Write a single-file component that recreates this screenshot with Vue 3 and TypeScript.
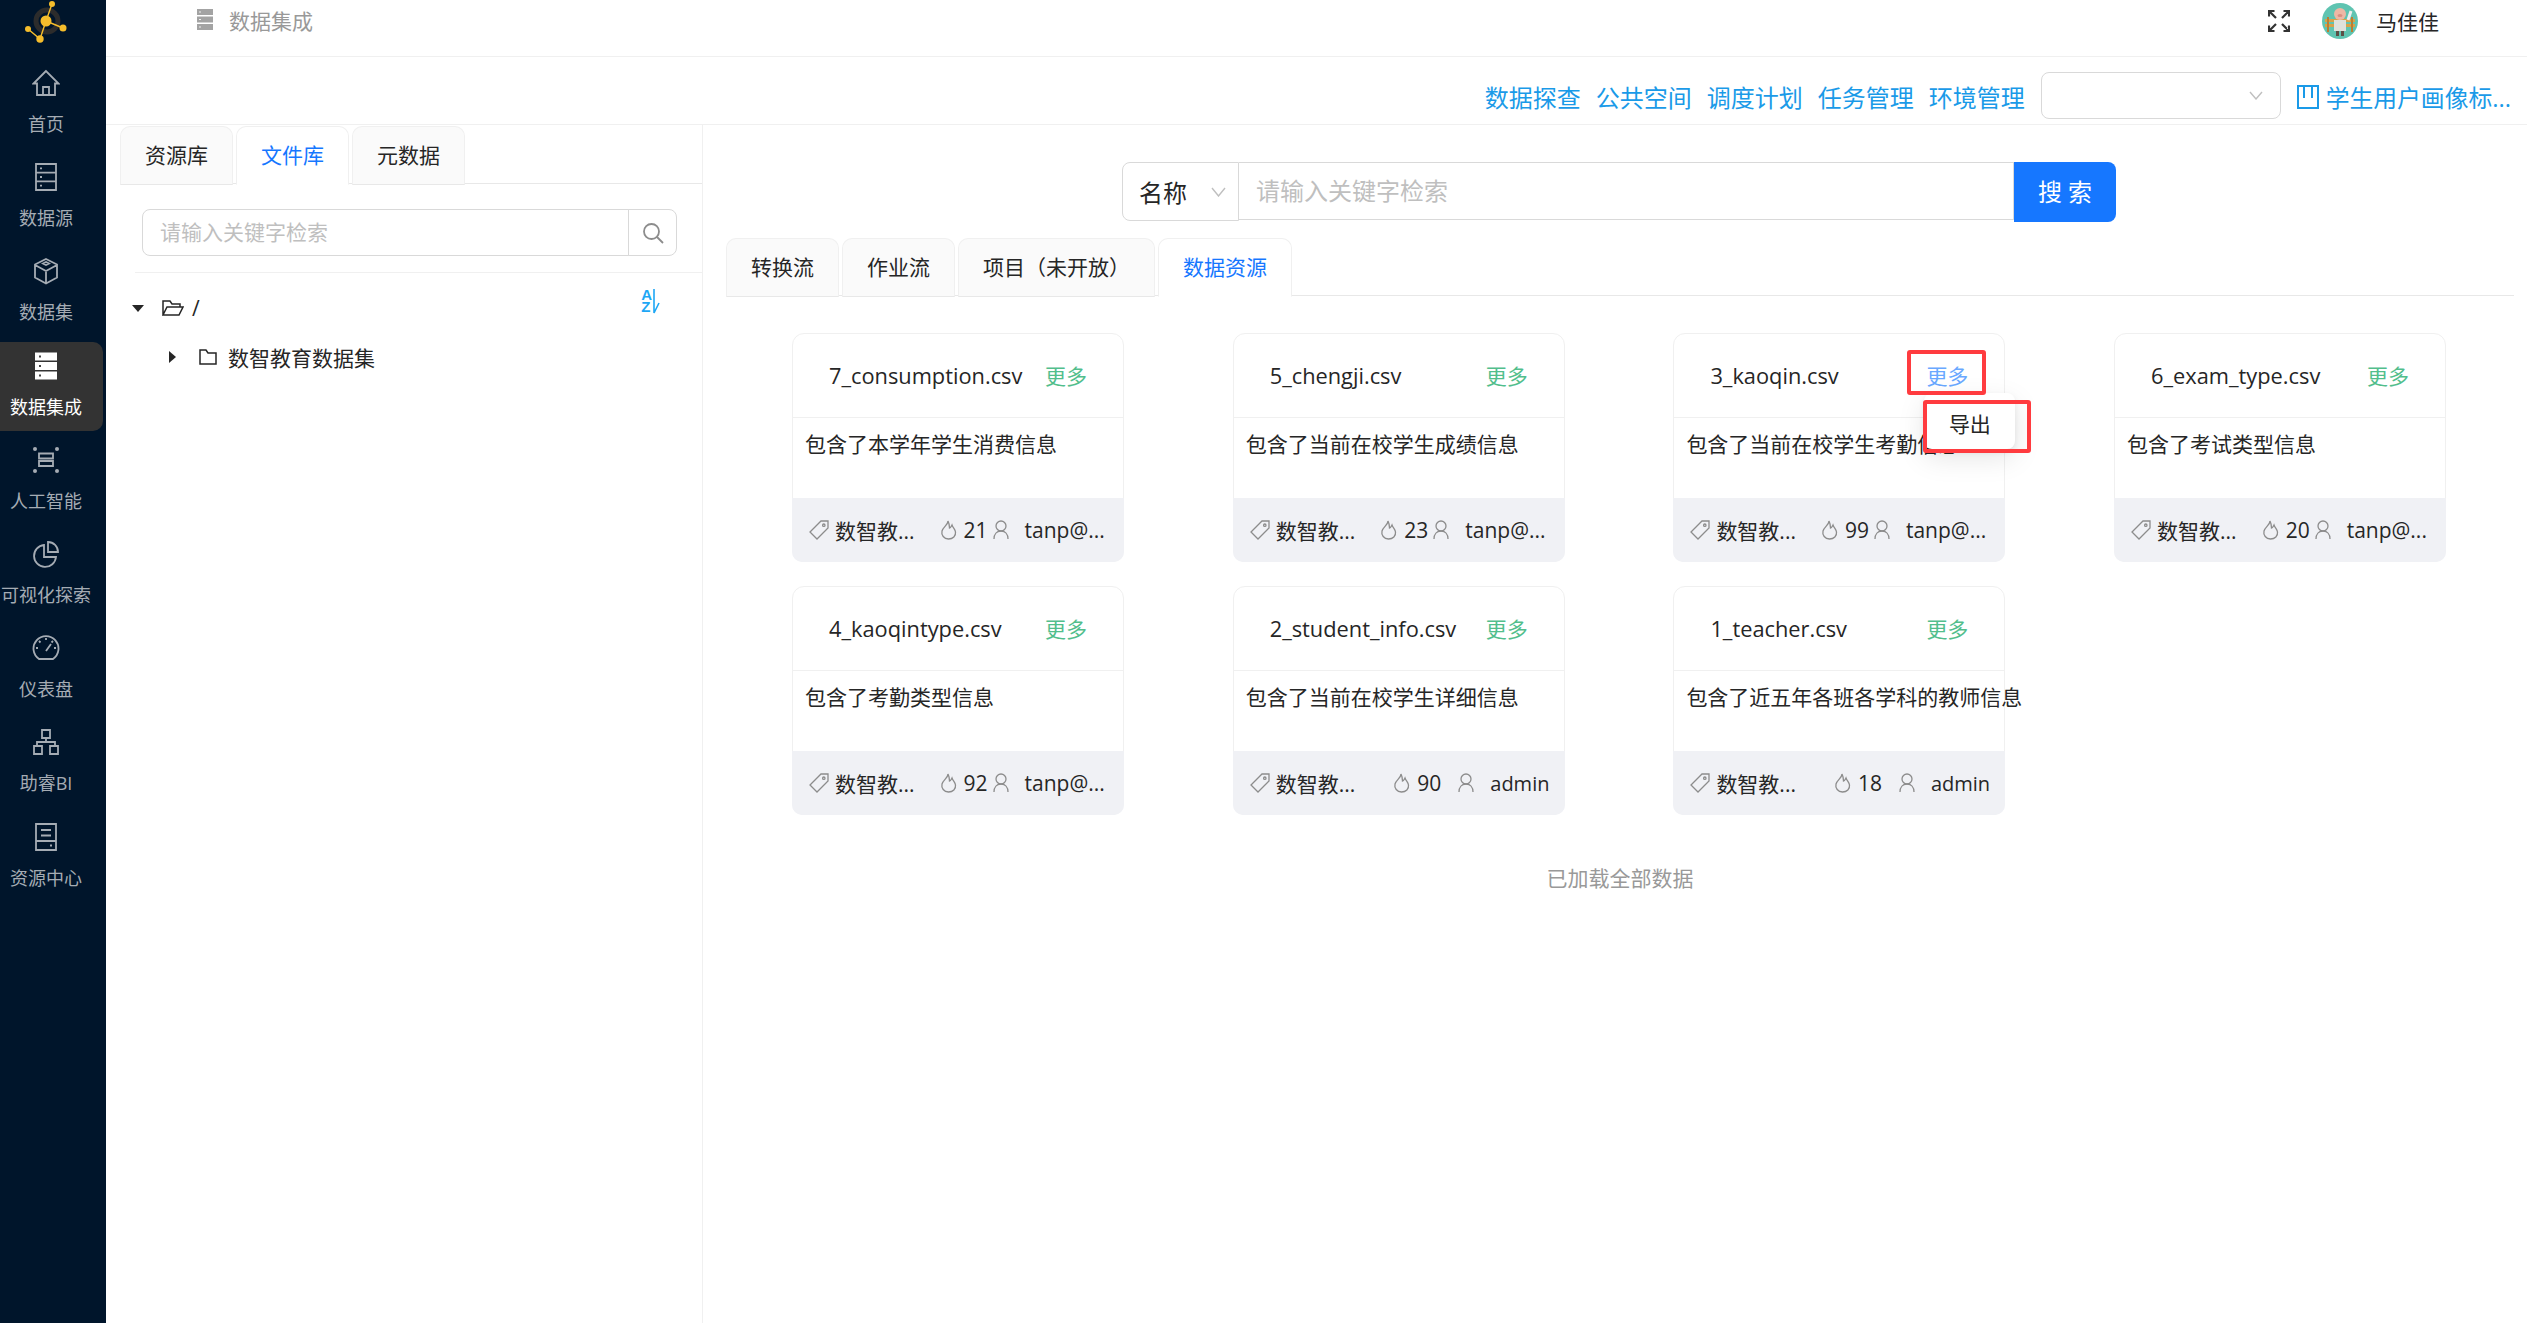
<template>
  <div class="layout">
    <aside class="sider">
      <svg class="logo" width="92" height="46" viewBox="0 0 92 46">
        <circle cx="47" cy="21" r="11" fill="none" stroke="#2c2c2c" stroke-width="5" />
        <path d="M46 21L52 4M46 21L63 28M46 21L40 39L28 29" stroke="#f5bd2c" stroke-width="1.4" fill="none" />
        <circle cx="46" cy="21" r="5.5" fill="#f5bd2c" />
        <circle cx="52" cy="4" r="3" fill="#f5bd2c" />
        <circle cx="28" cy="29" r="3" fill="#f5bd2c" />
        <circle cx="40" cy="39" r="3.7" fill="#f5bd2c" />
        <circle cx="63" cy="28" r="3.5" fill="#f5bd2c" />
      </svg>
      <nav class="nav">
        <a v-for="item in navItems" :key="item.label" class="nav-item" :class="{ active: item.active }">
          <svg v-if="item.active" class="nav-icon" width="28" height="28" viewBox="0 0 28 28">
            <path d="M3 0.5h22v8H3zM3 10h22v8H3zM3 19.5h22v8H3z" fill="#fff" />
            <path d="M7 4.5h2M7 14h2M7 23.5h2" stroke="#444" stroke-width="2" />
          </svg>
          <svg v-else class="nav-icon" width="28" height="28" viewBox="0 0 28 28" fill="none" stroke="currentColor" stroke-width="1.8">
            <path :d="item.d" />
            <template v-if="item.dots">
              <circle cx="3" cy="3" r="2" fill="currentColor" stroke="none" />
              <circle cx="25" cy="3" r="2" fill="currentColor" stroke="none" />
              <circle cx="3" cy="25" r="2" fill="currentColor" stroke="none" />
              <circle cx="25" cy="25" r="2" fill="currentColor" stroke="none" />
            </template>
          </svg>
          <span class="nav-label">{{ item.label }}</span>
        </a>
      </nav>
    </aside>

    <div class="page">
      <header class="topbar">
        <div class="crumb">
          <svg width="16" height="21" viewBox="0 0 16 21">
            <path d="M0 0h16v6H0zM0 7.5h16v6H0zM0 15h16v6H0z" fill="#a3a3a3" />
            <path d="M2 3h2M2 10.500h2M2 18h2" stroke="#eee" stroke-width="1" />
          </svg>
          <span>数据集成</span>
        </div>
        <div class="user">
          <svg class="full-icon" width="22" height="22" viewBox="0 0 22 22" fill="none" stroke="#333" stroke-width="2.2">
            <path d="M2 2l6 6M1 6.5V1h5.5M20 2l-6 6M15.500 1H21v5.500M2 20l6-6M1 15.500V21h5.500M20 20l-6-6M15.500 21H21v-5.500" />
          </svg>
          <svg class="avatar" width="36" height="36" viewBox="0 0 36 36">
            <circle cx="18" cy="18" r="18" fill="#5fc4b1" />
            <path d="M3 16h30v3H3zM3 21h30v3H3z" fill="#d8a24a" />
            <path d="M6 14v15M30 14v15" stroke="#b87f33" stroke-width="2" />
            <path d="M12 17h12v11H12z" fill="#dfe1dc" />
            <path d="M14 28h3v5h-3zM19 28h3v5h-3z" fill="#5c4f46" />
            <circle cx="18" cy="11" r="6" fill="#eeb7a4" />
            <ellipse cx="18" cy="12.500" rx="2.500" ry="1.600" fill="#d98f80" />
            <path d="M26 17l3-9" stroke="#eee" stroke-width="3" />
          </svg>
          <span class="user-name">马佳佳</span>
        </div>
      </header>

      <div class="toolbar">
        <a v-for="link in links" :key="link" class="tool-link">{{ link }}</a>
        <div class="tool-select">
          <svg width="14" height="9" viewBox="0 0 14 9" fill="none" stroke="#bfbfbf" stroke-width="1.400">
            <path d="M1 1l6 7 6-7" />
          </svg>
        </div>
        <div class="project">
          <svg width="22" height="24" viewBox="0 0 22 24" fill="none" stroke="#1a9ae8" stroke-width="2">
            <path d="M1 1h20v22H1zM7 1v12M15 1v12" />
          </svg>
          <span>学生用户画像标...</span>
        </div>
      </div>

      <div class="content">
        <section class="left">
          <div class="tab-bar left-tabs">
            <div v-for="tab in leftTabs" :key="tab" class="tab" :class="{ on: tab === '文件库' }">{{ tab }}</div>
          </div>
          <div class="left-search">
            <div class="left-input">请输入关键字检索</div>
            <div class="left-btn">
              <svg width="22" height="22" viewBox="0 0 22 22" fill="none" stroke="#8c8c8c" stroke-width="1.800">
                <circle cx="9.500" cy="9.500" r="7.500" />
                <path d="M15 15l6 6" />
              </svg>
            </div>
          </div>
          <div class="tree">
            <div class="tree-row root">
              <i class="caret caret-down"></i>
              <svg width="22" height="16" viewBox="0 0 22 16" fill="none" stroke="#262626" stroke-width="1.500">
                <path d="M1 15V1h7l2 3h8v3M1 15h16l4-8H5z" />
              </svg>
              <span class="slash">/</span>
              <div class="sort">
                <span class="sort-letters">A<br />Z</span>
                <svg width="8" height="25" viewBox="0 0 8 25" fill="none" stroke="#1ea7f5" stroke-width="1.600">
                  <path d="M2 0v24L7 14" />
                </svg>
              </div>
            </div>
            <div class="tree-row child">
              <i class="caret caret-side"></i>
              <svg width="18" height="16" viewBox="0 0 18 16" fill="none" stroke="#262626" stroke-width="1.500">
                <path d="M1 15V1h6l2 3h8v11z" />
              </svg>
              <span>数智教育数据集</span>
            </div>
          </div>
        </section>

        <section class="right">
          <div class="search">
            <div class="search-type">
              <span>名称</span>
              <svg width="15" height="10" viewBox="0 0 15 10" fill="none" stroke="#bfbfbf" stroke-width="1.400">
                <path d="M1 1l6.500 8L14 1" />
              </svg>
            </div>
            <div class="search-input">请输入关键字检索</div>
            <button class="search-btn">搜 索</button>
          </div>

          <div class="tab-bar right-tabs">
            <div v-for="tab in rightTabs" :key="tab" class="tab" :class="{ on: tab === '数据资源' }">{{ tab }}</div>
          </div>

          <div class="cards">
            <div v-for="card in cards" :key="card.name" class="card">
              <div class="card-head">
                <span class="card-name">{{ card.name }}</span>
                <a class="more" :class="{ hover: card.open }">更多</a>
              </div>
              <div class="card-body">{{ card.desc }}</div>
              <div class="card-foot" :class="{ short: card.user === 'admin' }">
                <svg width="20" height="20" viewBox="0 0 20 20" fill="none" stroke="#8c8c8c" stroke-width="1.300">
                  <path d="M12 1h7v7L8 19 1 12z" />
                  <circle cx="14.800" cy="5.200" r="1.200" />
                </svg>
                <span class="foot-tag">数智教...</span>
                <svg class="foot-flame" width="17" height="20" viewBox="0 0 17 20" fill="none" stroke="#8c8c8c" stroke-width="1.300">
                  <path d="M8 1C8 5 3 7 2 11C1 15 4 19 8.500 19C13 19 16 16 15.500 12C15 9 13 8 12 5C11 7 10 8 9.500 8C9.500 5 9 3 8 1Z" />
                </svg>
                <span class="foot-num">{{ card.hot }}</span>
                <svg class="foot-user-icon" width="16" height="20" viewBox="0 0 16 20" fill="none" stroke="#8c8c8c" stroke-width="1.300">
                  <circle cx="8" cy="6" r="5" />
                  <path d="M1 19c0-5 3-8 7-8s7 3 7 8" />
                </svg>
                <span class="foot-user">{{ card.user }}</span>
              </div>

              <template v-if="card.open">
                <div class="mark mark-more"></div>
                <div class="menu">导出</div>
                <div class="mark mark-menu"></div>
              </template>
            </div>
          </div>

          <div class="loaded">已加载全部数据</div>
        </section>
      </div>
    </div>
  </div>
</template>

<script setup lang="ts">
interface NavItem {
  label: string;
  d: string;
  active?: boolean;
  dots?: boolean;
}

interface FileCard {
  name: string;
  desc: string;
  hot: number;
  user: string;
  open?: boolean;
}

const navItems: NavItem[] = [
  { label: '首页', d: 'M14 2L1.500 14.500H5V26H23V14.500H26.500ZM11 26V18H17V26' },
  { label: '数据源', d: 'M4 1H24V27H4ZM4 9.700H24M4 18.300H24M8 5.300H10M8 14H10M8 22.700H10' },
  { label: '数据集', d: 'M14 2L25 7.500V20.500L14 26.500L3 20.500V7.500ZM3 8L14 14L25 8M14 14V26M11 6.500L14 5L17 6.500L14 8Z' },
  { label: '数据集成', d: '', active: true },
  { label: '人工智能', d: 'M7 7.500H21V12.500H7ZM7 15H21V20H7Z', dots: true },
  { label: '可视化探索', d: 'M12 5A11 11 0 1 0 24 17H12ZM16 2A10 10 0 0 1 26 12H16Z' },
  { label: '仪表盘', d: 'M7 25A12.500 12.500 0 1 1 21 25ZM14 17L19 10M14 4V6M4 14H6M22 14H24M7 7L8.500 8.500M21 7L19.500 8.500' },
  { label: '助睿BI', d: 'M10 2H18V10H10ZM14 10V14M5 18V14H23V18M2 18H10V26H2ZM18 18H26V26H18Z' },
  { label: '资源中心', d: 'M4 1H24V27H4ZM4 18H24M9 7H19M9 12.500H19M18 22.500H20' }
];

const links = ['数据探查', '公共空间', '调度计划', '任务管理', '环境管理'];
const leftTabs = ['资源库', '文件库', '元数据'];
const rightTabs = ['转换流', '作业流', '项目（未开放）', '数据资源'];

const cards: FileCard[] = [
  { name: '7_consumption.csv', desc: '包含了本学年学生消费信息', hot: 21, user: 'tanp@...' },
  { name: '5_chengji.csv', desc: '包含了当前在校学生成绩信息', hot: 23, user: 'tanp@...' },
  { name: '3_kaoqin.csv', desc: '包含了当前在校学生考勤信息', hot: 99, user: 'tanp@...', open: true },
  { name: '6_exam_type.csv', desc: '包含了考试类型信息', hot: 20, user: 'tanp@...' },
  { name: '4_kaoqintype.csv', desc: '包含了考勤类型信息', hot: 92, user: 'tanp@...' },
  { name: '2_student_info.csv', desc: '包含了当前在校学生详细信息', hot: 90, user: 'admin' },
  { name: '1_teacher.csv', desc: '包含了近五年各班各学科的教师信息', hot: 18, user: 'admin' }
];
</script>

<style>
html,
body {
  margin: 0;
  background: #fff;
}
</style>

<style scoped>
.layout {
  display: flex;
  width: 2527px;
  height: 1323px;
  overflow: hidden;
  font-family: "Open Sans", "Noto Sans CJK SC", sans-serif;
  font-size: 21px;
  color: #262626;
}

.sider {
  flex: none;
  width: 106px;
  background: #00152b;
}

.logo {
  display: block;
  height: 46px;
  margin-bottom: 13px;
}

.nav {
  display: flex;
  flex-direction: column;
  gap: 5.200px;
}

.nav-item {
  display: flex;
  flex-direction: column;
  align-items: center;
  box-sizing: border-box;
  width: 103px;
  height: 89px;
  padding: 10px 11px 0 0;
  border-radius: 0 10px 10px 0;
  color: #a5acb4;
}

.nav-item.active {
  background: #333;
  color: #fff;
}

.nav-icon {
  flex: none;
}

.nav-label {
  margin-top: 14px;
  font-size: 18px;
  line-height: 26px;
  white-space: nowrap;
}

.page {
  flex: 1;
  min-width: 0;
  display: flex;
  flex-direction: column;
}

.topbar {
  flex: none;
  display: flex;
  justify-content: space-between;
  align-items: center;
  box-sizing: border-box;
  height: 57px;
  padding: 0 88px 15px 91px;
  border-bottom: 1px solid #f0f0f0;
}

.crumb {
  display: flex;
  align-items: center;
  gap: 16px;
  margin-top: -2px;
  font-size: 21px;
  color: #999;
}

.user {
  display: flex;
  align-items: center;
}

.avatar {
  margin-left: 32px;
}

.user-name {
  margin-left: 18px;
  font-size: 21px;
}

.toolbar {
  flex: none;
  display: flex;
  justify-content: flex-end;
  align-items: center;
  gap: 15px;
  box-sizing: border-box;
  height: 68px;
  padding: 10px 16px 0 0;
  border-bottom: 1px solid #f0f0f0;
}

.tool-link {
  margin-top: 2px;
  font-size: 24px;
  color: #1a9ae8;
}

.tool-select {
  display: flex;
  justify-content: flex-end;
  align-items: center;
  box-sizing: border-box;
  width: 240px;
  height: 47px;
  margin-left: 1px;
  padding-right: 17px;
  border: 1px solid #d9d9d9;
  border-radius: 8px;
}

.project {
  display: flex;
  align-items: center;
  gap: 7px;
  margin-top: 2px;
  margin-left: 1px;
  font-size: 23.800px;
  color: #1a9ae8;
}

.content {
  flex: 1;
  display: flex;
  min-height: 0;
}

.left {
  flex: none;
  box-sizing: border-box;
  width: 597px;
  padding-left: 14px;
  border-right: 1px solid #f0f0f0;
}

.tab-bar {
  display: flex;
  height: 59px;
  padding-top: 1px;
  box-sizing: border-box;
  border-bottom: 1px solid #e8e8e8;
}

.left-tabs {
  gap: 3px;
}

.tab {
  box-sizing: border-box;
  height: 59px;
  padding: 0 24px;
  line-height: 56px;
  background: #fafafa;
  border: 1px solid #f0f0f0;
  border-bottom: 1px solid #e8e8e8;
  border-radius: 10px 10px 0 0;
  white-space: nowrap;
}

.tab.on {
  background: #fff;
  border-bottom-color: #fff;
  color: #1677ff;
}

.left-search {
  display: flex;
  box-sizing: border-box;
  width: 535px;
  height: 47px;
  margin: 25px 0 16px 22px;
}

.left-input {
  flex: 1;
  padding-left: 17px;
  line-height: 45px;
  color: #bfbfbf;
  border: 1px solid #d9d9d9;
  border-radius: 8px 0 0 8px;
}

.left-btn {
  display: flex;
  justify-content: center;
  align-items: center;
  width: 47px;
  margin-left: -1px;
  border: 1px solid #d9d9d9;
  border-radius: 0 8px 8px 0;
}

.tree {
  margin-left: 15px;
  border-top: 1px solid #f0f0f0;
}

.tree-row {
  display: flex;
  align-items: center;
}

.tree-row.root {
  height: 70px;
}

.tree-row.child {
  height: 28px;
  padding-left: 34px;
}

.caret {
  flex: none;
  display: block;
  width: 0;
  height: 0;
  border-style: solid;
  border-color: transparent;
}

.caret-down {
  margin: 0 18.500px 0 -3.500px;
  border-width: 7px 6px 0;
  border-top-color: #262626;
}

.caret-side {
  margin-right: 23px;
  border-width: 6px 0 6px 7px;
  border-left-color: #262626;
}

.slash {
  margin-left: 8px;
}

.tree-row.child span {
  margin-left: 11px;
}

.sort {
  display: flex;
  align-items: flex-start;
  margin: -14px 42px 0 auto;
  color: #1ea7f5;
}

.sort-letters {
  font-family: "Liberation Sans", sans-serif;
  font-size: 15px;
  font-weight: 700;
  line-height: 12.500px;
}

.right {
  flex: 1;
  min-width: 0;
  box-sizing: border-box;
  padding: 37px 13px 0 23px;
}

.search {
  display: flex;
  width: 994px;
  height: 60px;
  margin-left: 396px;
  margin-bottom: 15px;
}

.search-type {
  display: flex;
  justify-content: space-between;
  align-items: center;
  box-sizing: border-box;
  width: 117px;
  height: 59px;
  padding: 0 12px 0 16px;
  font-size: 24px;
  border: 1px solid #d9d9d9;
  border-radius: 8px 0 0 8px;
}

.search-input {
  flex: 1;
  box-sizing: border-box;
  height: 58px;
  padding-left: 17px;
  font-size: 24px;
  line-height: 56px;
  color: #bfbfbf;
  border: 1px solid #d9d9d9;
  border-left: none;
}

.search-btn {
  width: 102px;
  height: 60px;
  padding: 0 0 3px;
  font: inherit;
  font-size: 24px;
  color: #fff;
  background: #1677ff;
  border: none;
  border-radius: 0 8px 8px 0;
}

.right-tabs {
  gap: 3px;
}

.cards {
  display: grid;
  grid-template-columns: repeat(4, 332px);
  column-gap: 108.700px;
  row-gap: 24px;
  padding: 37px 0 0 66px;
}

.card {
  position: relative;
  display: flex;
  flex-direction: column;
  box-sizing: border-box;
  height: 229px;
  border: 1px solid #f0f0f0;
  border-radius: 12px;
}

.card-head {
  flex: none;
  display: flex;
  justify-content: space-between;
  align-items: center;
  box-sizing: border-box;
  height: 84px;
  padding: 0 36px 0 36px;
  border-bottom: 1px solid #f0f0f0;
}

.card-name {
  font-size: 21.800px;
  white-space: nowrap;
}

.more {
  margin-top: -2px;
  color: #52be8c;
}

.more.hover {
  color: #69a8ff;
}

.card-body {
  flex: 1;
  padding: 11px 0 0 12px;
  line-height: 30px;
  white-space: nowrap;
}

.card-foot {
  flex: none;
  display: flex;
  align-items: center;
  height: 64px;
  margin: 0 -1px -1px;
  padding-left: 17px;
  background: #f0f1f5;
  border-radius: 0 0 10px 10px;
  white-space: nowrap;
}

.foot-tag {
  margin-left: 6px;
}

.foot-flame {
  margin-left: 25px;
}

.foot-num {
  margin-left: 7px;
}

.foot-user-icon {
  margin-left: 5px;
}

.foot-user {
  margin-left: 16px;
}

.card-foot.short .foot-flame {
  margin-left: 38px;
}

.card-foot.short .foot-user-icon {
  margin-left: 17px;
}

.card-foot.short .foot-user {
  margin-left: 16px;
  font-size: 20px;
}

.mark {
  position: absolute;
  box-sizing: border-box;
  border: 4px solid #ff3b3f;
  border-radius: 3px;
  pointer-events: none;
  z-index: 3;
}

.mark-more {
  left: 233px;
  top: 16px;
  width: 79px;
  height: 45px;
}

.mark-menu {
  left: 249px;
  top: 66px;
  width: 108px;
  height: 53px;
}

.menu {
  position: absolute;
  left: 250px;
  top: 59px;
  z-index: 2;
  width: 91px;
  height: 56px;
  line-height: 62px;
  text-align: center;
  background: #fff;
  border-radius: 8px;
  box-shadow: 0 9px 28px rgba(0, 0, 0, 0.1), 0 3px 6px rgba(0, 0, 0, 0.08);
}

.loaded {
  margin-top: 47px;
  line-height: 32px;
  text-align: center;
  color: #999;
}
</style>
